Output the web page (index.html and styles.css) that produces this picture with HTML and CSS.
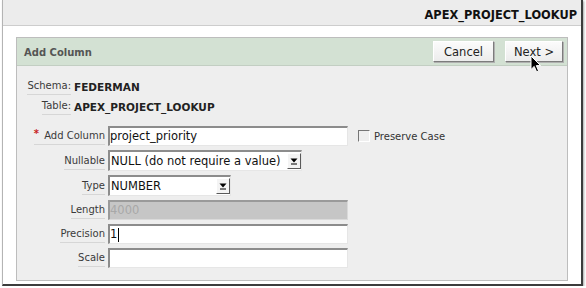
FILE: index.html
```html
<!DOCTYPE html>
<html>
<head>
<meta charset="utf-8">
<link rel="stylesheet" href="styles.css">
</head>
<body>
<div class="frame">
  <div class="topbar"><span class="crumb">APEX_PROJECT_LOOKUP</span></div>
  <section class="panel">
    <div class="panel-head">
      <h2 class="title">Add Column</h2>
      <div class="actions">
        <button class="btn btn-cancel">Cancel</button>
        <button class="btn btn-next">Next &gt;</button>
      </div>
    </div>
    <div class="panel-body">
      <div class="meta">
        <div class="mlabel"><span>Schema:</span></div><div class="mval">FEDERMAN</div>
        <div class="mlabel"><span>Table:</span></div><div class="mval">APEX_PROJECT_LOOKUP</div>
      </div>
      <div class="form">
        <div class="flabel"><span><b class="star">*</b> Add Column</span></div>
        <div class="field">
          <div class="input">project_priority</div>
          <span class="check"></span><span class="checklabel">Preserve Case</span>
        </div>

        <div class="flabel"><span>Nullable</span></div>
        <div class="field">
          <div class="select sel-null"><span class="seltext">NULL (do not require a value)</span><span class="arrow"><svg width="8" height="8" viewBox="0 0 8 8"><path d="M0.5 1.5 L7.5 1.5 L4 5.5 Z" fill="#000"/><rect x="1" y="6.5" width="6" height="1" fill="#000"/></svg></span></div>
        </div>

        <div class="flabel"><span>Type</span></div>
        <div class="field">
          <div class="select sel-type"><span class="seltext">NUMBER</span><span class="arrow"><svg width="8" height="8" viewBox="0 0 8 8"><path d="M0.5 1.5 L7.5 1.5 L4 5.5 Z" fill="#000"/><rect x="1" y="6.5" width="6" height="1" fill="#000"/></svg></span></div>
        </div>

        <div class="flabel"><span>Length</span></div>
        <div class="field"><div class="input disabled">4000</div></div>

        <div class="flabel"><span>Precision</span></div>
        <div class="field"><div class="input">1<span class="caret"></span></div></div>

        <div class="flabel"><span>Scale</span></div>
        <div class="field"><div class="input"></div></div>
      </div>
    </div>
  </section>
  <svg class="cursor" width="12" height="18" viewBox="0 0 12 18"><path d="M1 1 L1 14.5 L4.2 11.4 L6.6 16.8 L8.6 15.9 L6.3 10.6 L10.6 10.6 Z" fill="#000" stroke="#fff" stroke-width="1"/></svg>
</div>
</body>
</html>
```
FILE: styles.css
```css
* { box-sizing: border-box; }
body {
  margin: 0;
  background: #fff;
  font-family: "DejaVu Sans", "Liberation Sans", sans-serif;
  color: #333;
}
.frame {
  position: relative;
  width: 581px;
  height: 286px;
  margin-left: 2px;
  border-left: 1px solid #b4b4b4;
  border-right: 2px solid #3c3c3c;
  border-bottom: 2px solid #3c3c3c;
  box-shadow: 1px 1px 2px rgba(0,0,0,0.35);
  background: #fff;
  display: flex;
  flex-direction: column;
  overflow: hidden;
}
.topbar {
  height: 26px;
  flex: none;
  background: #ececec;
  border-bottom: 1px solid #cdcdcd;
  display: flex;
  align-items: center;
  justify-content: flex-end;
  padding: 4px 4px 0 0;
}
.crumb {
  font-weight: bold;
  font-size: 11.4px;
  color: #111;
}
.panel {
  flex: 1;
  margin: 11px 13px 3px;
  border: 1px solid #bdbdbd;
  background: #eeeeee;
  display: flex;
  flex-direction: column;
}
.panel-head {
  height: 28px;
  flex: none;
  background: #d3e1d3;
  border-bottom: 1px solid #c2cec2;
  display: flex;
  justify-content: space-between;
  align-items: flex-start;
  padding: 3px 4px 0 7px;
}
.title {
  margin: 0;
  padding-top: 1px;
  font-size: 10px;
  line-height: 21px;
  font-weight: bold;
  color: #555;
}
.actions {
  display: flex;
  gap: 11px;
}
.btn {
  height: 21px;
  padding: 0;
  font-family: "DejaVu Sans", sans-serif;
  font-size: 11.5px;
  color: #222;
  background: linear-gradient(#fbfbfb, #ececec);
  border: 1px solid;
  border-color: #ffffff #7c7c7c #7c7c7c #ffffff;
  box-shadow: 1px 1px 0 #b0b0b0;
}
.btn-cancel { width: 61px; }
.btn-next { width: 58px; }
.panel-body {
  padding: 10px 0 0 0;
}
.meta {
  display: grid;
  grid-template-columns: 54px auto;
  column-gap: 3px;
  grid-auto-rows: 20px;
}
.mlabel {
  display: flex;
  justify-content: flex-end;
  align-items: flex-end;
  padding-bottom: 1px;
}
.mlabel span, .flabel span {
  font-size: 10px;
  line-height: 13px;
  color: #3a3a3a;
  padding-bottom: 2px;
  border-bottom: 1px solid #d6d6d6;
}
.mval {
  font-size: 10.5px;
  font-weight: bold;
  color: #222;
  display: flex;
  align-items: center;
  padding-top: 1px;
}
.form {
  margin-top: 10px;
  display: grid;
  grid-template-columns: 88px auto;
  column-gap: 3px;
  row-gap: 4px;
}
.flabel {
  display: flex;
  justify-content: flex-end;
  align-items: flex-end;
  padding-bottom: 1px;
}
.star {
  color: #c81e1e;
  font-size: 10px;
  font-weight: bold;
  margin-right: 2px;
  position: relative;
  top: -2px;
}
.field {
  display: flex;
  align-items: center;
}
.input {
  width: 240px;
  height: 20px;
  background: #fff;
  border-top: 2px solid #8c8c8c;
  border-left: 2px solid #8c8c8c;
  border-right: 1px solid #e6e6e6;
  border-bottom: 1px solid #e6e6e6;
  font-size: 11.5px;
  line-height: 17px;
  color: #111;
  display: flex;
  align-items: center;
}
.input.disabled {
  background: #c6c6c6;
  color: #a8a8a8;
  border-top-color: #9a9a9a;
  border-left-color: #9a9a9a;
  border-right-color: #dadada;
  border-bottom-color: #dadada;
}
.caret {
  display: inline-block;
  width: 1px;
  height: 14px;
  background: #000;
  margin-left: 1px;
}
.check {
  width: 12px;
  height: 12px;
  margin-left: 10px;
  border: 1px solid;
  border-color: #767676 #ffffff #ffffff #767676;
  background: #efefef;
}
.checklabel {
  margin-left: 4px;
  font-size: 10px;
  color: #333;
}
.select {
  height: 21px;
  background: #fff;
  border-top: 2px solid #8c8c8c;
  border-left: 2px solid #8c8c8c;
  border-right: 1px solid #e6e6e6;
  border-bottom: 1px solid #e6e6e6;
  display: flex;
  align-items: center;
  justify-content: space-between;
  padding-left: 1px;
}
.sel-null { width: 194px; }
.sel-type { width: 123px; }
.seltext {
  font-size: 11.5px;
  color: #111;
}
.arrow {
  width: 14px;
  height: 16px;
  border: 1px solid;
  border-color: #ffffff #5a5a5a #5a5a5a #ffffff;
  background: #f4f4f4;
  display: flex;
  align-items: center;
  justify-content: center;
}
.cursor {
  position: absolute;
  left: 527px;
  top: 55px;
}
```
